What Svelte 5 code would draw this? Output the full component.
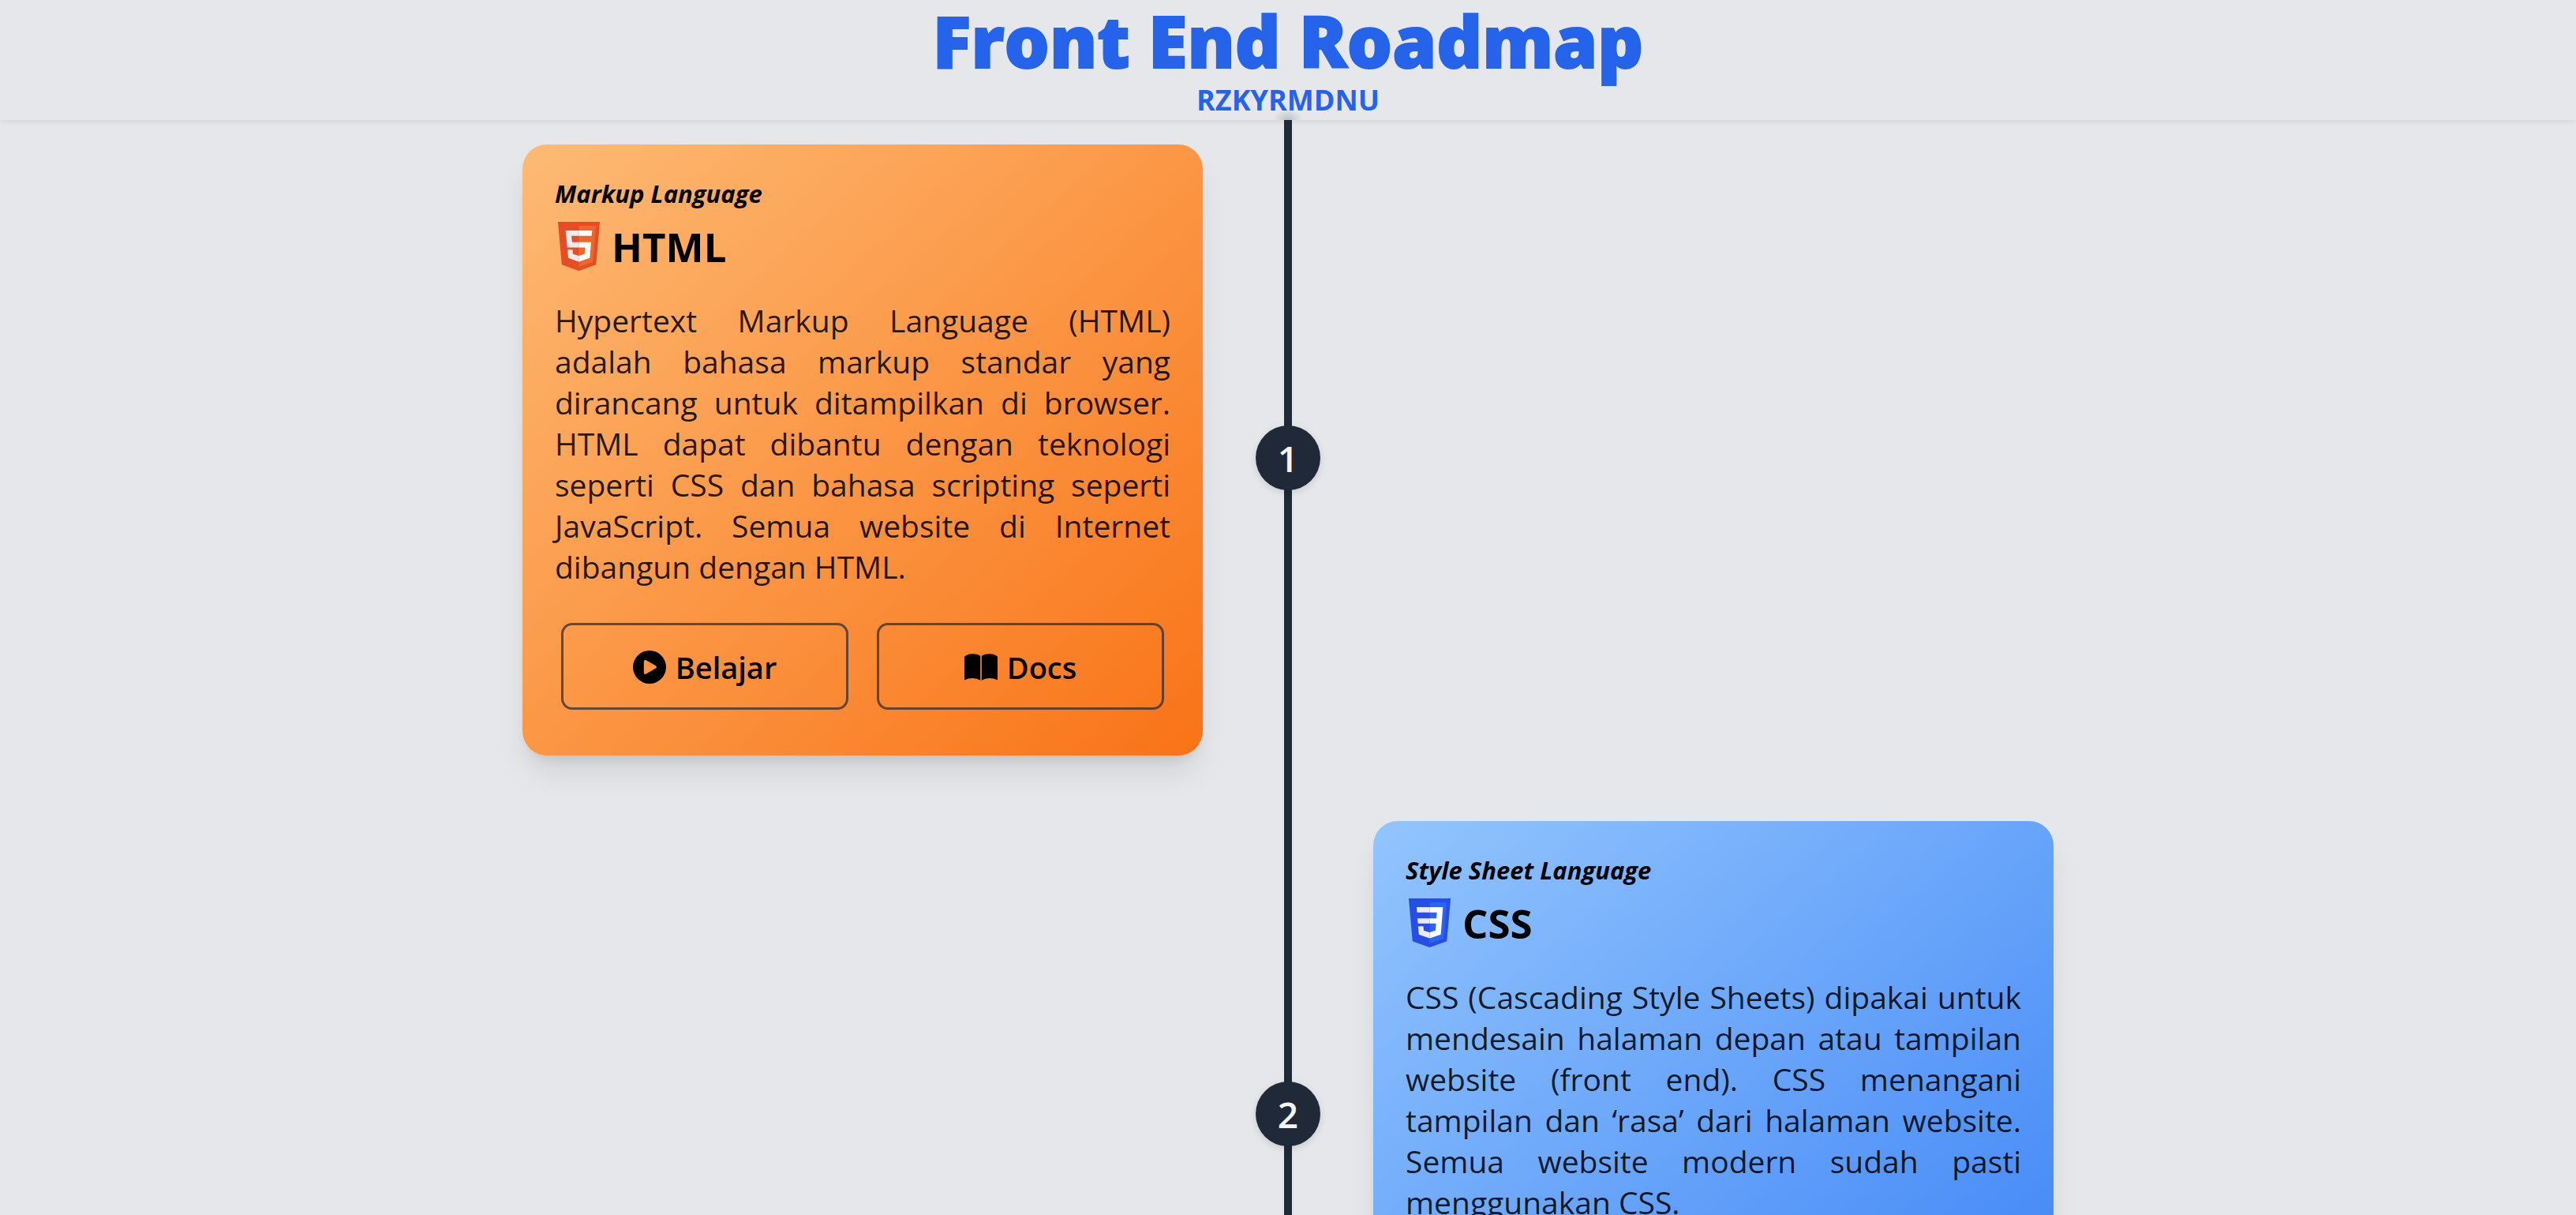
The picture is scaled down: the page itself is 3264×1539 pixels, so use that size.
<script>
  const steps = [
    {
      kind: 'Markup Language',
      name: 'HTML',
      theme: 'orange',
      text: 'Hypertext Markup Language (HTML) adalah bahasa markup standar yang dirancang untuk ditampilkan di browser. HTML dapat dibantu dengan teknologi seperti CSS dan bahasa scripting seperti JavaScript. Semua website di Internet dibangun dengan HTML.'
    },
    {
      kind: 'Style Sheet Language',
      name: 'CSS',
      theme: 'blue',
      text: 'CSS (Cascading Style Sheets) dipakai untuk mendesain halaman depan atau tampilan website (front end). CSS menangani tampilan dan ‘rasa’ dari halaman website. Semua website modern sudah pasti menggunakan CSS.'
    }
  ];
</script>

<div class="page">
  <header>
    <h1>Front End Roadmap</h1>
    <a class="author" href="#author">RZKYRMDNU</a>
  </header>

  <main>
    {#each steps as step, i}
      <section class="row" class:right={i % 2 === 1}>
        <article class="card {step.theme}">
          <p class="kind">{step.kind}</p>
          <div class="heading">
            {#if step.name === 'HTML'}
              <svg class="logo" viewBox="0 0 384 448" aria-hidden="true">
                <path fill="#e44d26" d="M0 0h384l-35 392-157 56L35 392z" />
                <path fill="#f16529" d="M192 36h157l-30 332-127 43z" />
                <path fill="#ebebeb" d="M192 80H70l16 154h106v-48h-62l-6-58h68zM192 311l-54-16-4-40H88l7 76 97 33z" />
                <path fill="#fff" d="M192 80h122l-5 48H192zM192 186h112l-12 145-100 33v-53l52-16 5-61h-57z" />
              </svg>
            {:else}
              <svg class="logo" viewBox="0 0 384 448" aria-hidden="true">
                <path fill="#264de4" d="M0 0h384l-35 392-157 56L35 392z" />
                <path fill="#2965f1" d="M192 36h157l-30 332-127 43z" />
                <path fill="#ebebeb" d="M192 80H72l4 48h116zM192 182H80l5 48h107zM192 311l-54-16-4-40H86l7 76 99 33z" />
                <path fill="#fff" d="M192 80h122l-20 251-102 33v-53l53-16 5-65h-58v-48h62l4-54h-66z" />
              </svg>
            {/if}
            <h2>{step.name}</h2>
          </div>
          <p class="text">{step.text}</p>
          <div class="actions">
            <button type="button">
              <svg viewBox="0 0 512 512" aria-hidden="true">
                <path fill-rule="evenodd" d="M256 0a256 256 0 1 0 0 512 256 256 0 0 0 0-512zM180 150q-12 8-12 22v168q0 14 12 22 13 6 24-1l148-86q13-8 13-19t-13-20l-148-86q-12-7-24 0z" />
              </svg>
              Belajar
            </button>
            <button type="button">
              <svg viewBox="0 0 512 512" aria-hidden="true">
                <path d="M16 82Q60 52 126 52q75 0 120 30v378q-50-32-120-32-64 0-126 28V96q6-8 16-14zM266 82q45-30 120-30 66 0 110 30 10 6 16 14v360q-62-28-126-28-70 0-120 32z" />
              </svg>
              Docs
            </button>
          </div>
        </article>
        <span class="marker">{i + 1}</span>
      </section>
    {/each}
  </main>
</div>

<style>
  :global(body) {
    background: #e5e7eb;
    font-family: 'Open Sans', 'Noto Sans', sans-serif;
    color: #000;
  }
  .page {
    height: 100vh;
    overflow-y: auto;
    scrollbar-width: none;
  }
  header {
    display: flex;
    flex-direction: column;
    align-items: center;
    color: #2563eb;
    padding-bottom: 2px;
    box-shadow: 0 3px 6px rgba(0, 0, 0, 0.06);
    background: radial-gradient(ellipse 18px 14px at 50% 100%, rgba(31, 41, 55, 0.2), transparent) no-repeat;
  }
  h1 {
    margin: 0;
    font-size: 90px;
    line-height: 103px;
    font-weight: 800;
    -webkit-text-stroke: 2px #2563eb;
  }
  .author {
    font-size: 36px;
    line-height: 47px;
    font-weight: 700;
    color: inherit;
    text-decoration: none;
  }
  main {
    display: flex;
    flex-direction: column;
    gap: 83px;
    padding: 31px 24px 83px;
    background: linear-gradient(#1f2937, #1f2937) center / 10px 100% no-repeat;
  }
  .row {
    display: grid;
    grid-template-columns: 1fr 82px 1fr;
    column-gap: 67px;
    align-items: center;
    width: 100%;
    max-width: 1940px;
    margin: 0 auto;
  }
  .card {
    grid-area: 1 / 1;
    box-sizing: border-box;
    padding: 41px 41px 58px;
    border-radius: 31px;
    box-shadow: 0 26px 39px -8px rgba(0, 0, 0, 0.1), 0 10px 15px -8px rgba(0, 0, 0, 0.1);
  }
  .right .card {
    grid-column: 3;
  }
  .orange {
    background: linear-gradient(to bottom right, #fdba74, #f97316);
  }
  .blue {
    background: linear-gradient(to bottom right, #93c5fd, #3b82f6);
  }
  .kind {
    margin: 0;
    font-size: 31px;
    line-height: 42px;
    font-weight: 700;
    font-style: italic;
  }
  .heading {
    display: flex;
    align-items: center;
    gap: 14px;
    height: 92px;
    padding-left: 3px;
  }
  .logo {
    width: 55px;
    height: 62px;
  }
  h2 {
    margin: 0;
    font-size: 51px;
    line-height: 68px;
    font-weight: 700;
  }
  .text {
    margin: 22px 0 45px;
    font-size: 39px;
    line-height: 52px;
    text-align: justify;
    color: rgba(0, 0, 0, 0.85);
  }
  .actions {
    display: grid;
    grid-template-columns: 1fr 1fr;
    gap: 36px;
    padding: 0 8px;
  }
  button {
    display: flex;
    align-items: center;
    justify-content: center;
    gap: 12px;
    height: 110px;
    padding: 2px 0 0;
    border: 3px solid rgba(31, 41, 55, 0.7);
    border-radius: 14px;
    background: transparent;
    font: 600 38px / 52px 'Open Sans', 'Noto Sans', sans-serif;
    color: #000;
  }
  button svg {
    width: 42px;
    height: 42px;
  }
  .marker {
    grid-area: 1 / 2;
    display: flex;
    align-items: center;
    justify-content: center;
    height: 82px;
    margin-top: 20px;
    border-radius: 50%;
    background: #1f2937;
    box-shadow: 0 3px 10px rgba(0, 0, 0, 0.12);
    font-size: 46px;
    font-weight: 600;
    color: #f3f4f6;
  }
</style>
